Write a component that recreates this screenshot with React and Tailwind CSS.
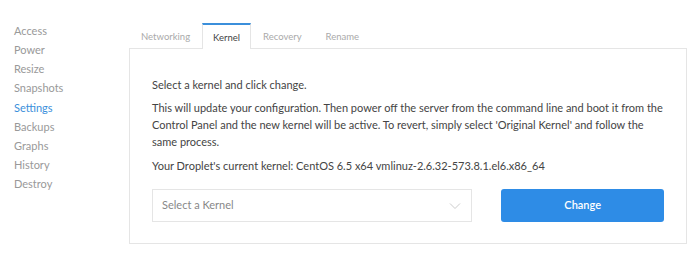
import React from 'react';

const navItems = ['Access', 'Power', 'Resize', 'Snapshots', 'Settings', 'Backups', 'Graphs', 'History', 'Destroy'];
const tabs = ['Networking', 'Kernel', 'Recovery', 'Rename'];

const App = () => {
  return (
    <div className="w-[700px] h-[263px] bg-white flex font-['Lato',sans-serif] text-[11px] text-[#444]">
      {/* Sidebar */}
      <nav className="w-[129px] pl-[14px] pt-[21px] flex flex-col">
        {navItems.map((item) => (
          <a
            key={item}
            className={`h-[19.15px] leading-[19px] text-[11px] ${item === 'Settings' ? 'text-[#3b8fdb]' : 'text-[#999]'}`}
          >
            {item}
          </a>
        ))}
      </nav>

      {/* Main */}
      <div className="flex flex-col pt-[22px] w-[558px]">
        <div className="flex h-[26px]">
          {tabs.map((tab) => (
            <div
              key={tab}
              className={`text-[9.5px] ${
                tab === 'Kernel'
                  ? 'px-[10px] border-t-2 border-[#3b8fdb] border-x border-x-[#e5e5e5] bg-white text-[#444] relative top-[1px] h-[26px] leading-[25px]'
                  : 'px-[12px] text-[#aaa] leading-[30px]'
              }`}
            >
              {tab}
            </div>
          ))}
        </div>
        <div className="border border-[#e5e5e5] h-[196px] px-[22px] pt-[27px]">
          <p className="leading-[17px]">Select a kernel and click change.</p>
          <p className="leading-[17px] mt-[6px]">
            This will update your configuration. Then power off the server from the command line and boot it from the Control Panel and the new kernel will be active. To revert, simply select 'Original Kernel' and follow the same process.
          </p>
          <p className="leading-[17px] mt-[7px]">Your Droplet's current kernel: CentOS 6.5 x64 vmlinuz-2.6.32-573.8.1.el6.x86_64</p>
          <div className="flex mt-[15px] gap-[29px]">
            <div className="w-[321px] h-[33px] border border-[#e5e5e5] flex items-center justify-between pl-[9px] pr-[10px] text-[#888]">
              <span>Select a Kernel</span>
              <svg width="12" height="8" viewBox="0 0 12 8" fill="none" stroke="#ccc" strokeWidth="1">
                <path d="M1 1.5 L6 6.5 L11 1.5" />
              </svg>
            </div>
            <button className="w-[163px] h-[33px] rounded-[3px] bg-[#2e8ce6] text-white text-[11px] font-semibold">
              Change
            </button>
          </div>
        </div>
      </div>
    </div>
  );
};

export default App;
